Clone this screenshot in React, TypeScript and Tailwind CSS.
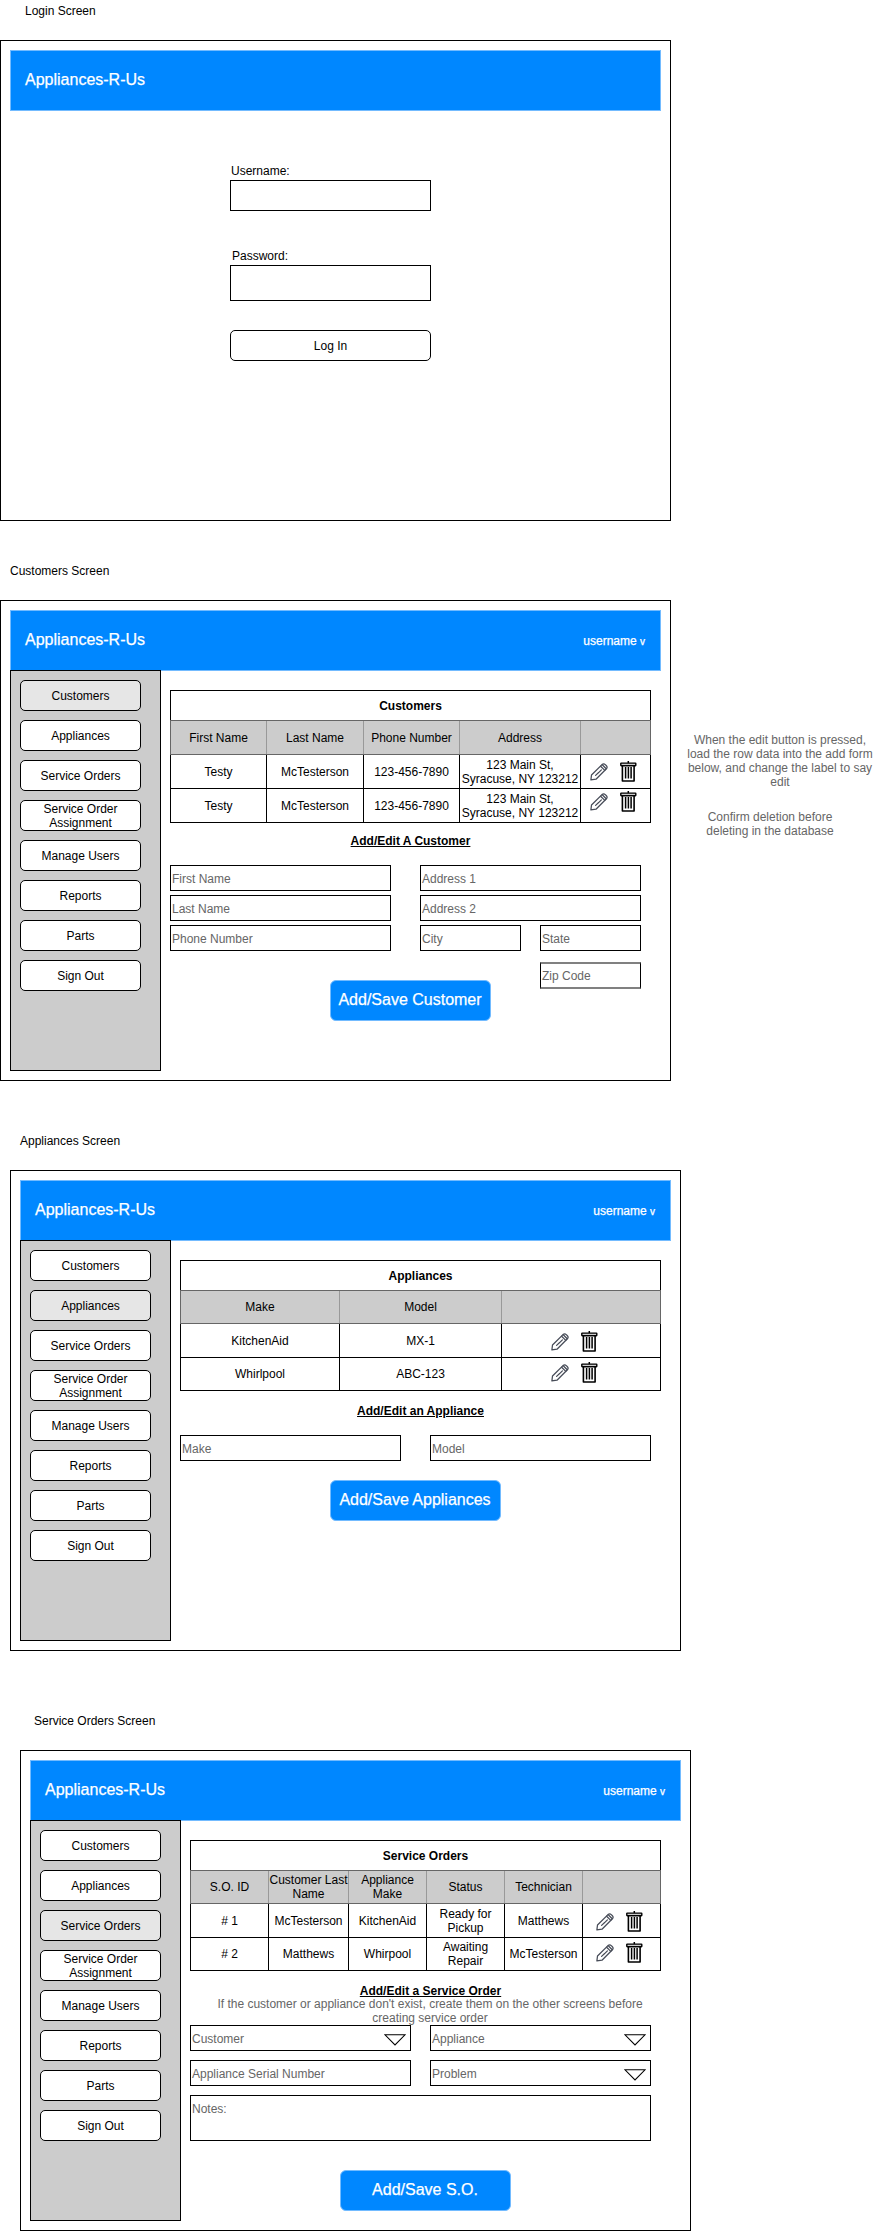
import type { ReactNode } from "react";

const NAV = [
  "Customers",
  "Appliances",
  "Service Orders",
  "Service Order Assignment",
  "Manage Users",
  "Reports",
  "Parts",
  "Sign Out",
];

function Pencil() {
  return (
    <svg width="18" height="18" viewBox="0 0 18 18" fill="none" stroke="#474c58" strokeWidth="1.25" strokeLinejoin="round" strokeLinecap="round" className="mt-[2px] block">
      <path d="M.9 16.9 1.5 12 12 1.6Q13.7.2 15.3 1.6L16.4 2.7Q17.8 4.2 16.4 5.8L6 16.2Z" />
      <path d="M10.6 3.2 14.8 7.4M12.3 1.8 16.2 5.7" />
      <path d="M5.6 12.4 8.4 9.7M8.6 9.6 11.4 6.9" />
    </svg>
  );
}

function Trash() {
  return (
    <svg width="17" height="21" viewBox="0 0 17 21" fill="none" stroke="#000" className="block">
      <path d="M8.3 0V2" strokeWidth="1.5" />
      <path d="M2.4 5V20H14.1V5" strokeWidth="1.6" strokeLinejoin="round" />
      <rect x="0.8" y="2.1" width="15" height="2.6" rx="0.4" fill="#ccc" strokeWidth="1.4" />
      <path d="M5.6 6V17.4M8.4 6V17.4M11.1 6V17.4" strokeWidth="1.5" />
    </svg>
  );
}

function Actions({ className }: { className: string }) {
  return (
    <div className={`flex h-full w-full items-start ${className}`}>
      <Pencil />
      <div className="w-3 shrink-0" />
      <Trash />
    </div>
  );
}

function ScreenLabel({ children, className }: { children: ReactNode; className: string }) {
  return <div className={`flex items-start ${className}`}>{children}</div>;
}

function Header({ user = true }: { user?: boolean }) {
  return (
    <header className="flex h-[61px] items-center justify-between border border-[#73bbff] bg-[#0087ff] pr-[15px] pl-[14px] text-white [-webkit-text-stroke:0.25px_white]">
      <div className="pb-[2px] text-[16px] leading-[19px]">Appliances-R-Us</div>
      {user && (
        <div className="pt-[2px]">
          username <span className="text-[10px]">v</span>
        </div>
      )}
    </header>
  );
}

function Frame({ children, className, user }: { children: ReactNode; className: string; user?: boolean }) {
  return (
    <section className={`flex h-[481px] w-[671px] shrink-0 flex-col border border-black p-[9px] ${className}`}>
      <Header user={user} />
      {children}
    </section>
  );
}

function Sidebar({ active }: { active: string }) {
  return (
    <nav className="-mt-px flex h-[401px] w-[151px] shrink-0 flex-col gap-[9px] border border-black bg-[#ccc] px-[9px] pt-[9px]">
      {NAV.map((n) => (
        <button
          key={n}
          className={`flex h-[31px] w-[121px] items-center justify-center rounded-[5px] border border-black px-2 text-center ${n === active ? "bg-[#e6e6e6]" : "bg-white"}`}
        >
          {n}
        </button>
      ))}
    </nav>
  );
}

type Row = { h: string; cells: ReactNode[] };

function Table({ title, head, headH, cols, rows }: { title: string; head: string[]; headH: string; cols: string; rows: Row[] }) {
  return (
    <div>
      <div className="flex h-[30px] items-center justify-center border-x border-t border-black pt-px font-bold">{title}</div>
      <div className={`grid ${cols} ${headH} border-y border-l border-[#666] bg-[#ccc]`}>
        {head.map((c, i) => (
          <div key={i} className={`flex items-center justify-center border-r text-center ${i === head.length - 1 ? "border-[#666]" : "border-[#999]"}`}>
            {c}
          </div>
        ))}
      </div>
      {rows.map((r, i) => (
        <div key={i} className={`grid ${cols} ${r.h} border-l border-black`}>
          {r.cells.map((c, j) => (
            <div key={j} className="flex items-center justify-center border-r border-b border-black text-center">
              {c}
            </div>
          ))}
        </div>
      ))}
    </div>
  );
}

function Field({ label, className = "", arrow = false }: { label: string; className?: string; arrow?: boolean }) {
  return (
    <div className={`flex h-[26px] items-center justify-between border border-black pt-[2px] pr-[4px] pl-px text-[#666] ${className}`}>
      {label}
      {arrow && (
        <svg width="22" height="12" viewBox="0 0 22 12" fill="none" stroke="#000" strokeWidth="1.1" className="mt-[2px]">
          <path d="M1 .8H21L11 11Z" />
        </svg>
      )}
    </div>
  );
}

function Save({ children, className }: { children: ReactNode; className: string }) {
  return (
    <button className={`flex h-[41px] items-center justify-center rounded-[6px] border border-[#73bbff] bg-[#0087ff] pr-px pb-[3px] text-[16px] leading-[19px] text-white [-webkit-text-stroke:0.25px_white] ${className}`}>
      {children}
    </button>
  );
}

function Heading({ children }: { children: ReactNode }) {
  return <h2 className="text-center font-bold underline">{children}</h2>;
}

export default function App() {
  return (
    <main className="h-[2231px] w-[881px] overflow-hidden bg-white font-['Liberation_Sans',Arial,sans-serif] text-[12px] leading-[14px] text-black">
      <ScreenLabel className="h-[40px] pt-[4px] pl-[25px]">Login Screen</ScreenLabel>
      <Frame className="" user={false}>
        <div className="ml-[220px] flex w-[201px] flex-col pt-[53px]">
          <div className="pl-px">Username:</div>
          <div className="mt-[2px] h-[31px] border border-black" />
          <div className="mt-[38px] pl-[2px]">Password:</div>
          <div className="mt-[2px] h-[36px] border border-black" />
          <button className="mt-[29px] h-[31px] rounded-[5px] border border-black">Log In</button>
        </div>
      </Frame>

      <ScreenLabel className="h-[79px] pt-[43px] pl-[10px]">Customers Screen</ScreenLabel>
      <div className="flex">
        <Frame className="">
          <div className="flex">
            <Sidebar active="Customers" />
            <div className="ml-[9px] w-[481px] pt-[19px]">
              <Table
                title="Customers"
                head={["First Name", "Last Name", "Phone Number", "Address", ""]}
                headH="h-[35px]"
                cols="grid-cols-[96px_97px_96px_121px_70px]"
                rows={[
                  { h: "h-[34px]", cells: ["Testy", "McTesterson", "123-456-7890", <span key="a">123 Main St,<br />Syracuse, NY 123212</span>, <Actions key="b" className="pt-[6px] pl-[9px]" />] },
                  { h: "h-[34px]", cells: ["Testy", "McTesterson", "123-456-7890", <span key="a">123 Main St,<br />Syracuse, NY 123212</span>, <Actions key="b" className="pt-[2px] pl-[9px]" />] },
                ]}
              />
              <div className="pt-[11px]">
                <Heading>Add/Edit A Customer</Heading>
              </div>
              <div className="mt-[17px] flex gap-[29px]">
                <div className="flex w-[221px] flex-col gap-1">
                  <Field label="First Name" />
                  <Field label="Last Name" />
                  <Field label="Phone Number" />
                </div>
                <div className="flex w-[221px] flex-col gap-1">
                  <Field label="Address 1" />
                  <Field label="Address 2" />
                  <div className="flex justify-between">
                    <Field label="City" className="w-[101px]" />
                    <Field label="State" className="w-[101px]" />
                  </div>
                  <div className="mt-[7px] flex h-[27px] w-[101px] items-center self-end border-x border-y-2 border-x-black border-y-[#808080] pt-px pl-px text-[#666]">Zip Code</div>
                </div>
              </div>
              <Save className="-mt-[9px] ml-[160px] w-[161px]">Add/Save Customer</Save>
            </div>
          </div>
        </Frame>
        <aside className="ml-[9px] flex w-[200px] flex-col pt-[133px] text-center text-[#666]">
          <p>
            When the edit button is pressed,
            <br />
            load the row data into the add form
            <br />
            below, and change the label to say
            <br />
            edit
          </p>
          <p className="mt-[21px] w-[180px]">
            Confirm deletion before
            <br />
            deleting in the database
          </p>
        </aside>
      </div>

      <ScreenLabel className="h-[89px] pt-[53px] pl-[20px]">Appliances Screen</ScreenLabel>
      <Frame className="ml-[10px]">
        <div className="flex">
          <Sidebar active="Appliances" />
          <div className="ml-[9px] w-[481px] pt-[19px]">
            <Table
              title="Appliances"
              head={["Make", "Model", ""]}
              headH="h-[34px]"
              cols="grid-cols-[159px_162px_159px]"
              rows={[
                { h: "h-[34px]", cells: ["KitchenAid", "MX-1", <Actions key="b" className="pt-[7px] pl-[49px]" />] },
                { h: "h-[33px]", cells: ["Whirlpool", "ABC-123", <Actions key="b" className="pt-[4px] pl-[49px]" />] },
              ]}
            />
            <div className="pt-[13px]">
              <Heading>Add/Edit an Appliance</Heading>
            </div>
            <div className="mt-[17px] flex gap-[29px]">
              <Field label="Make" className="w-[221px]" />
              <Field label="Model" className="w-[221px]" />
            </div>
            <Save className="mt-[19px] ml-[150px] w-[171px]">Add/Save Appliances</Save>
          </div>
        </div>
      </Frame>

      <ScreenLabel className="h-[99px] pt-[63px] pl-[34px]">Service Orders Screen</ScreenLabel>
      <Frame className="ml-[20px]">
        <div className="flex">
          <Sidebar active="Service Orders" />
          <div className="ml-[9px] w-[471px] pt-[19px]">
            <Table
              title="Service Orders"
              head={["S.O. ID", "Customer Last Name", "Appliance Make", "Status", "Technician", ""]}
              headH="h-[34px]"
              cols="grid-cols-[78px_80px_78px_78px_78px_78px]"
              rows={[
                { h: "h-[34px]", cells: ["# 1", "McTesterson", "KitchenAid", <span key="s">Ready for<br />Pickup</span>, "Matthews", <Actions key="b" className="pt-[7px] pl-[13px]" />] },
                { h: "h-[33px]", cells: ["# 2", "Matthews", "Whirpool", <span key="s">Awaiting<br />Repair</span>, "McTesterson", <Actions key="b" className="pt-[4px] pl-[13px]" />] },
              ]}
            />
            <div className="w-[481px] pt-[13px]">
              <Heading>Add/Edit a Service Order</Heading>
            </div>
            <p className="-mt-px w-[480px] text-center text-[#666]">
              If the customer or appliance don't exist, create them on the other screens before
              <br />
              creating service order
            </p>
            <div className="grid grid-cols-[221px_221px] gap-x-[19px] gap-y-[9px]">
              <Field label="Customer" arrow />
              <Field label="Appliance" arrow />
              <Field label="Appliance Serial Number" />
              <Field label="Problem" arrow />
              <div className="col-span-2 h-[46px] border border-black pt-[6px] pl-px text-[#666]">Notes:</div>
            </div>
            <Save className="mt-[29px] ml-[150px] w-[171px]">Add/Save S.O.</Save>
          </div>
        </div>
      </Frame>
    </main>
  );
}
